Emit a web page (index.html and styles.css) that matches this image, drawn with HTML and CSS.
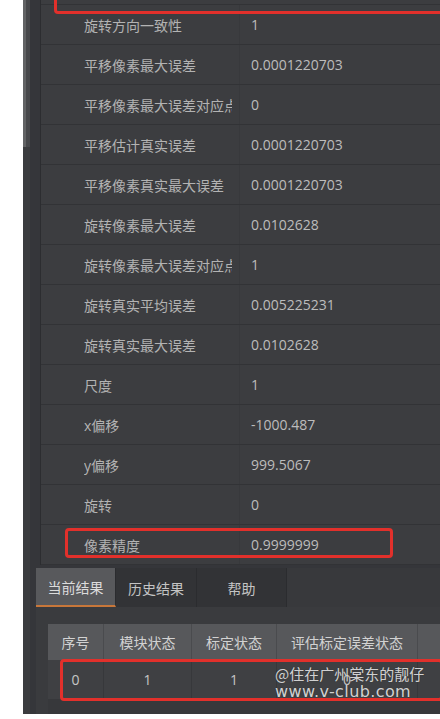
FILE: index.html
```html
<!DOCTYPE html>
<html lang="zh-CN">
<head>
    <meta charset="UTF-8">
    <meta name="viewport" content="width=device-width, initial-scale=1.0">
    <title>标定结果</title>
    <link rel="stylesheet" href="styles.css">
</head>
<body>

    <div class="app">
        <div class="scrollbar"><div class="scroll-thumb"></div></div>

        <div class="main">
            <div class="attr-list">
                <div class="attr-row attr-row-top"></div>
                <div class="attr-row"><div class="attr-name"><span>旋转方向一致性</span></div><div class="attr-value">1</div></div>
                <div class="attr-row"><div class="attr-name"><span>平移像素最大误差</span></div><div class="attr-value">0.0001220703</div></div>
                <div class="attr-row"><div class="attr-name"><span>平移像素最大误差对应点</span></div><div class="attr-value">0</div></div>
                <div class="attr-row"><div class="attr-name"><span>平移估计真实误差</span></div><div class="attr-value">0.0001220703</div></div>
                <div class="attr-row"><div class="attr-name"><span>平移像素真实最大误差</span></div><div class="attr-value">0.0001220703</div></div>
                <div class="attr-row"><div class="attr-name"><span>旋转像素最大误差</span></div><div class="attr-value">0.0102628</div></div>
                <div class="attr-row"><div class="attr-name"><span>旋转像素最大误差对应点</span></div><div class="attr-value">1</div></div>
                <div class="attr-row"><div class="attr-name"><span>旋转真实平均误差</span></div><div class="attr-value">0.005225231</div></div>
                <div class="attr-row"><div class="attr-name"><span>旋转真实最大误差</span></div><div class="attr-value">0.0102628</div></div>
                <div class="attr-row"><div class="attr-name"><span>尺度</span></div><div class="attr-value">1</div></div>
                <div class="attr-row"><div class="attr-name"><span>x偏移</span></div><div class="attr-value">-1000.487</div></div>
                <div class="attr-row"><div class="attr-name"><span>y偏移</span></div><div class="attr-value">999.5067</div></div>
                <div class="attr-row"><div class="attr-name"><span>旋转</span></div><div class="attr-value">0</div></div>
                <div class="attr-row"><div class="attr-name"><span>像素精度</span></div><div class="attr-value">0.9999999</div></div>
            </div>

            <div class="tabs">
                <div class="tab tab-active">当前结果</div>
                <div class="tab">历史结果</div>
                <div class="tab tab-help">帮助</div>
            </div>

            <div class="result-panel">
                <div class="result-table">
                    <div class="result-row result-head">
                        <div class="cell c1">序号</div>
                        <div class="cell c2">模块状态</div>
                        <div class="cell c3">标定状态</div>
                        <div class="cell c4">评估标定误差状态</div>
                        <div class="cell c5"></div>
                    </div>
                    <div class="result-row">
                        <div class="cell c1">0</div>
                        <div class="cell c2">1</div>
                        <div class="cell c3">1</div>
                        <div class="cell c4">0</div>
                        <div class="cell c5"></div>
                    </div>
                </div>
            </div>
        </div>

        <!-- marcas rojas y marca de agua encima de la captura -->
        <div class="mark mark-top"></div>
        <div class="mark mark-precision"></div>
        <div class="mark mark-result"></div>
        <div class="watermark">
            <div class="wm-name">@住在广州棠东的靓仔</div>
            <div class="wm-site">www.v-club.com</div>
        </div>
    </div>

</body>
</html>
```

FILE: styles.css
```css
body {
    margin: 0;
    padding: 0;
    background: #ffffff;
    font-family: 'Open Sans', 'Noto Sans CJK SC', sans-serif;
    font-size: 14px;
    overflow: hidden;
}

.app {
    position: relative;
    display: flex;
    margin-left: 23px;
    height: 714px;
    overflow: hidden;
}

.scrollbar {
    width: 7px;
    background: #3b3c3f;
    flex-shrink: 0;
}

.scroll-thumb {
    height: 147px;
    background: linear-gradient(to right, #626365 0, #626365 3px, #47484b 3px);
}

.main {
    flex: 1;
    background: #35363a;
    display: flex;
    flex-direction: column;
}

.attr-list {
    margin-left: 10px;
    border-left: 1px solid #2c2d30;
    background: #3c3d40;
}

.attr-row {
    display: grid;
    grid-template-columns: 199px 1fr;
    height: 39px;
    border-bottom: 1px solid #323336;
    align-items: center;
}

.attr-row-top {
    height: 4px;
}

.attr-name {
    height: 100%;
    display: flex;
    align-items: center;
    padding-left: 43px;
    padding-right: 7px;
    border-right: 1px solid #38393c;
    color: #b3b3b3;
    overflow: hidden;
}

.attr-name span {
    display: block;
    width: 148px;
    overflow: hidden;
    white-space: nowrap;
}

.attr-value {
    padding-left: 11px;
    color: #bcbcbc;
    white-space: nowrap;
}

.tabs {
    display: flex;
    margin-left: 6px;
    margin-top: 3px;
    height: 39px;
    background: #38393c;
}

.tab {
    width: 80px;
    display: flex;
    align-items: center;
    justify-content: center;
    color: #c4c4c4;
    background: #323336;
    border-right: 1px solid #2b2c2f;
    box-sizing: border-box;
}

.tab-active {
    background: #58595c;
    color: #dcdcdc;
    border-bottom: 2px solid #c8773a;
}

.tab + .tab {
    width: 81px;
}

.tab-help {
    width: 90px !important;
}

.result-panel {
    flex: 1;
    margin-left: 6px;
    padding: 17px 0 0 12px;
    background: #3a3b3e;
}

.result-table {
    background: #37383b;
    height: 100%;
}

.result-row {
    display: flex;
    height: 39px;
    background: #3f4043;
    color: #c6c6c6;
}

.result-head {
    height: 36px;
    background: #57585b;
    color: #d2d2d2;
}

.cell {
    display: flex;
    align-items: center;
    justify-content: center;
    border-right: 1px solid #4a4b4e;
    box-sizing: border-box;
    white-space: nowrap;
}

.result-row:not(.result-head) .cell {
    border-right-color: #37383b;
}

.c1 { width: 56px; }
.c2 { width: 88px; }
.c3 { width: 85px; }
.c4 { width: 141px; }
.c5 { flex: 1; border-right: none; }

.mark {
    position: absolute;
    border: 3px solid #e2302b;
    border-radius: 4px;
    box-sizing: border-box;
}

.mark-top {
    left: 31px;
    top: -30px;
    width: 420px;
    height: 44px;
}

.mark-precision {
    left: 42px;
    top: 528px;
    width: 328px;
    height: 30px;
}

.mark-result {
    left: 37px;
    top: 659px;
    width: 383px;
    height: 42px;
}

.watermark {
    position: absolute;
    left: 252px;
    top: 665px;
    color: rgba(255, 255, 255, 0.8);
    text-shadow: 0 0 1px rgba(0, 0, 0, 0.4);
    line-height: 18px;
}

.wm-name {
    font-family: 'Noto Sans CJK SC', sans-serif;
    font-size: 15px;
}

.wm-site {
    font-family: 'DejaVu Sans', sans-serif;
    font-size: 16px;
    letter-spacing: 0.4px;
}
```
